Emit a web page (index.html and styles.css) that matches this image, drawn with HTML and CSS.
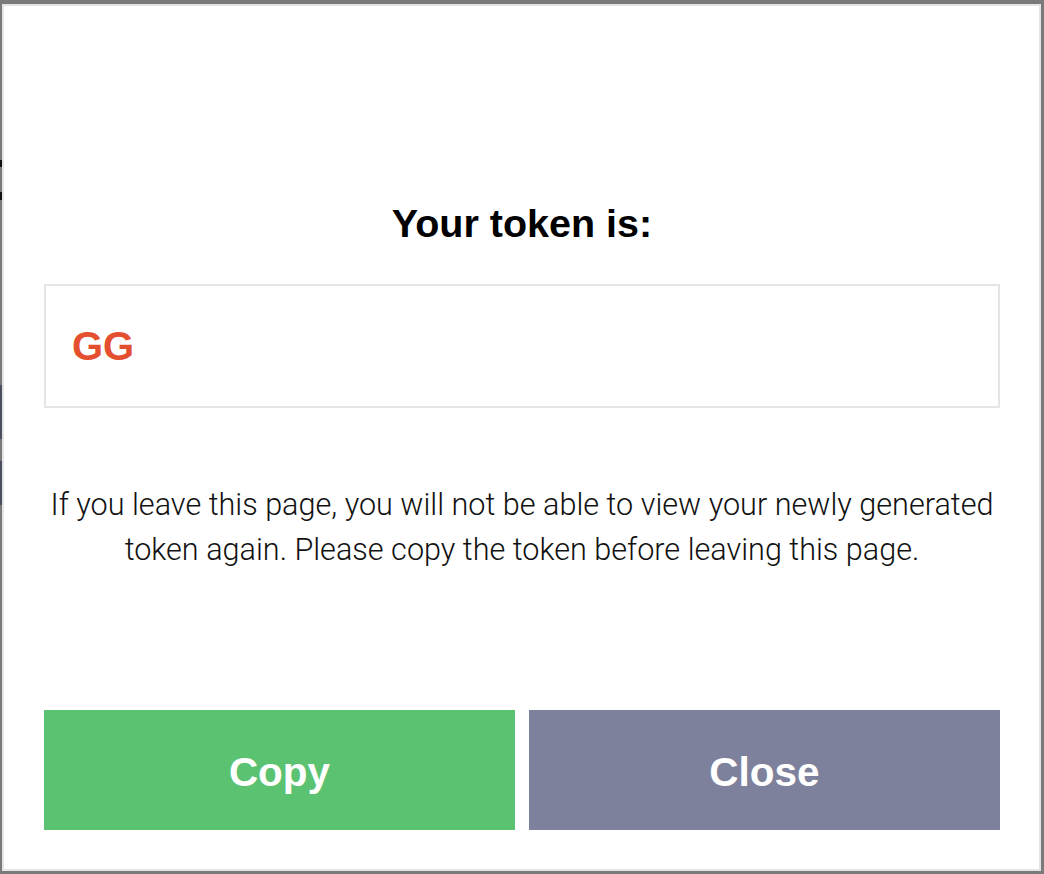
FILE: index.html
```html
<!DOCTYPE html>
<html lang="en">
<head>
<meta charset="utf-8">
<title>Your token</title>
<link rel="stylesheet" href="styles.css">
</head>
<body>
<div class="page-peek">
  <span class="peek peek-a"></span>
  <span class="peek peek-b"></span>
  <span class="peek peek-c"></span>
  <span class="peek peek-d"></span>
</div>
<div class="modal">
  <h1 class="modal-title">Your token is:</h1>
  <div class="token-box"><span class="token-value">GG</span></div>
  <p class="modal-note">If you leave this page, you will not be able to view your newly generated token again. Please copy the token before leaving this page.</p>
  <div class="modal-actions">
    <button class="btn btn-copy">Copy</button>
    <button class="btn btn-close">Close</button>
  </div>
</div>
</body>
</html>
```

FILE: styles.css
```css
html, body {
  margin: 0;
  padding: 0;
  height: 100%;
}
body {
  background: #7a7a7a;
  display: flex;
  box-sizing: border-box;
  padding: 4px 3px 3px 0;
  font-family: "Liberation Sans", Arial, sans-serif;
}
.page-peek {
  width: 2px;
  flex: none;
  display: flex;
  flex-direction: column;
}
.peek {
  display: block;
  width: 2px;
}
.peek-a { background: #111; height: 7px; margin-top: 156px; }
.peek-b { background: #111; height: 8px; margin-top: 25px; }
.peek-c { background: #4b4e5f; height: 54px; margin-top: 185px; }
.peek-d { background: #4b4e5f; height: 44px; margin-top: 22px; }
.modal {
  flex: 1;
  background: #fff;
  border: 2px solid #e4e4e4;
  box-sizing: border-box;
  padding: 0 39px 39px 40px;
  display: flex;
  flex-direction: column;
}
.modal-title {
  margin: 195px 0 0;
  text-align: center;
  font-size: 39.5px;
  line-height: 44px;
  font-weight: 700;
  color: #000;
}
.token-box {
  margin-top: 39px;
  height: 124px;
  box-sizing: border-box;
  border: 2px solid #e5e5e5;
  display: flex;
  align-items: center;
  padding-left: 26px;
}
.token-value {
  color: #e4502f;
  font-weight: 700;
  font-size: 40px;
}
.modal-note {
  margin: 74px 0 0;
  text-align: center;
  font-family: Roboto, "Liberation Sans", sans-serif;
  font-weight: 300;
  font-size: 30.6px;
  line-height: 45px;
  color: #111;
}
.modal-actions {
  margin-top: auto;
  display: flex;
  gap: 14px;
}
.btn {
  flex: 1;
  height: 120px;
  border: none;
  padding: 4px 0 0;
  color: #fff;
  font-family: "Liberation Sans", Arial, sans-serif;
  font-weight: 700;
  font-size: 40.5px;
  cursor: pointer;
}
.btn-copy { background: #5bc272; }
.btn-close { background: #7e819b; }
```
